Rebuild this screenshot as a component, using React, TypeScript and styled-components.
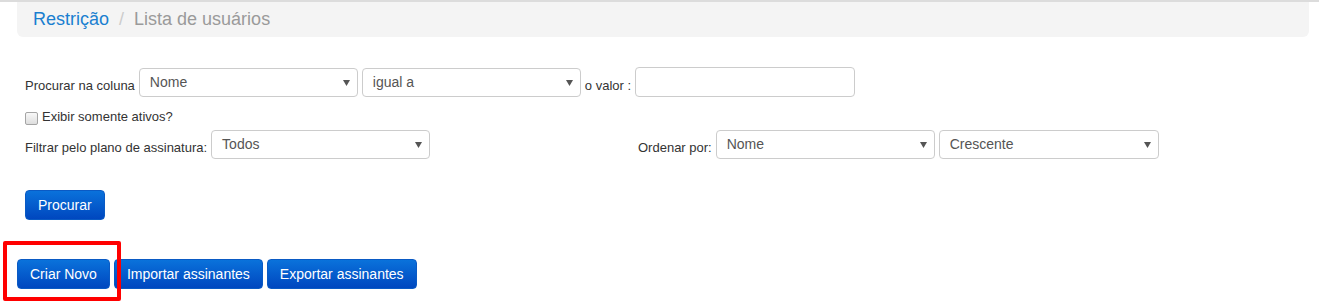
import React from 'react';
import styled, { createGlobalStyle } from 'styled-components';

const GlobalStyle = createGlobalStyle`
  html, body {
    margin: 0;
    padding: 0;
    background: #ffffff;
    font-family: "Liberation Sans", Arial, sans-serif;
  }
`;

const Page = styled.div`
  width: 1319px;
  height: 304px;
  overflow: hidden;
  border-top: 2px solid #dcdcdc;
  box-sizing: border-box;
  padding: 0 10px 0 17px;
`;

const Breadcrumb = styled.ol`
  display: flex;
  align-items: center;
  margin: 0;
  height: 35px;
  padding: 0 16px;
  list-style: none;
  background: #f4f4f4;
  border-radius: 0 0 6px 6px;
  font-size: 18px;
`;

const Crumb = styled.li<{ $active?: boolean }>`
  color: ${(p) => (p.$active ? '#9a9a9a' : '#1a7fd0')};
`;

const Sep = styled.li`
  color: #cccccc;
  padding: 0 10px;
`;

const Form = styled.div`
  padding: 30px 0 0 8px;
  display: flex;
  flex-direction: column;
  font-size: 13px;
  color: #333;
`;

const Row = styled.div`
  display: flex;
  align-items: center;
  gap: 4px;
`;

const Label = styled.span`
  padding-top: 6px;
`;

const SelectBox = styled.div<{ $w?: number }>`
  width: ${(p) => p.$w ?? 219}px;
  height: 29px;
  box-sizing: border-box;
  border: 1px solid #cccccc;
  border-radius: 4px;
  background: #fff;
  display: flex;
  align-items: flex-start;
  justify-content: space-between;
  padding: 5px 7px 0 10px;
  font-size: 14px;
  color: #555;
`;

const Arrow = styled.svg`
  width: 7px;
  height: 6px;
  margin-top: 6px;
  fill: #555;
`;

const TextInput = styled.div`
  width: 220px;
  height: 30px;
  box-sizing: border-box;
  border: 1px solid #cccccc;
  border-radius: 4px;
  background: #fff;
`;

const CheckRow = styled.label`
  display: flex;
  align-items: center;
  gap: 4px;
  margin-top: 10px;
  height: 18px;
`;

const Check = styled.span`
  width: 11px;
  height: 11px;
  margin-top: 4px;
  border: 1px solid #a5a5a5;
  border-radius: 2px;
  background: linear-gradient(#f8f8f8, #dedede);
`;

const FilterRow = styled.div`
  display: grid;
  grid-template-columns: 613px 1fr;
  align-items: center;
  margin-top: 5px;
`;

const Button = styled.button`
  height: 30px;
  box-sizing: border-box;
  padding: 0 12px;
  border: 1px solid #0a5ac4;
  border-radius: 4px;
  background: linear-gradient(#0a72db, #0047bf);
  color: #fff;
  font-family: "Liberation Sans", Arial, sans-serif;
  font-size: 14px;
  cursor: pointer;
`;

const SearchRow = styled.div`
  margin-top: 31px;
`;

const Actions = styled.div`
  display: flex;
  gap: 4px;
  margin-top: 39px;
`;

const Highlight = styled.div`
  position: relative;
  display: flex;
`;

const RedBox = styled.div`
  position: absolute;
  left: -14px;
  top: -18px;
  width: 118px;
  height: 60px;
  box-sizing: border-box;
  border: 4px solid #ff0000;
  border-radius: 2px;
  pointer-events: none;
`;

const Select = ({ value, w }: { value: string; w?: number }) => (
  <SelectBox $w={w}>
    <span>{value}</span>
    <Arrow viewBox="0 0 7 6">
      <path d="M0 0h7L3.5 6z" />
    </Arrow>
  </SelectBox>
);

export default function App() {
  return (
    <Page>
      <GlobalStyle />
      <Breadcrumb>
        <Crumb>Restrição</Crumb>
        <Sep>/</Sep>
        <Crumb $active>Lista de usuários</Crumb>
      </Breadcrumb>

      <Form>
        <Row>
          <Label>Procurar na coluna</Label>
          <Select value="Nome" />
          <Select value="igual a" />
          <Label>o valor :</Label>
          <TextInput />
        </Row>

        <CheckRow>
          <Check />
          <span>Exibir somente ativos?</span>
        </CheckRow>

        <FilterRow>
          <Row>
            <Label>Filtrar pelo plano de assinatura:</Label>
            <Select value="Todos" />
          </Row>
          <Row>
            <Label>Ordenar por:</Label>
            <Select value="Nome" />
            <Select value="Crescente" w={220} />
          </Row>
        </FilterRow>

        <SearchRow>
          <Button>Procurar</Button>
        </SearchRow>
      </Form>

      <Actions>
        <Highlight>
          <Button>Criar Novo</Button>
          <RedBox />
        </Highlight>
        <Button>Importar assinantes</Button>
        <Button>Exportar assinantes</Button>
      </Actions>
    </Page>
  );
}
